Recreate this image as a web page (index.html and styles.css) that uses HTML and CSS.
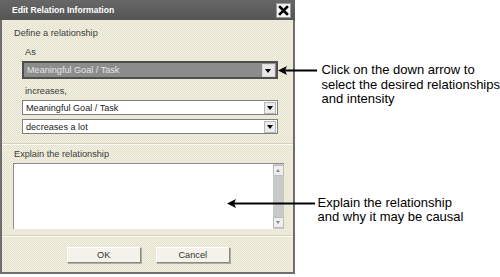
FILE: index.html
```html
<!DOCTYPE html>
<html lang="en">
<head>
    <meta charset="UTF-8">
    <title>Edit Relation Information</title>
    <link rel="stylesheet" href="styles.css">
</head>
<body>

<div class="page">

    <!-- Dialog -->
    <div class="dialog">
        <div class="titlebar">
            <span class="title">Edit Relation Information</span>
            <button class="close-btn">
                <svg width="11" height="11" viewBox="0 0 11 11">
                    <path d="M2 2 L9 9 M9 2 L2 9" stroke="#000" stroke-width="2.6" stroke-linecap="square"/>
                </svg>
            </button>
        </div>

        <div class="dialog-body">
            <div class="label">Define a relationship</div>

            <div class="group">
                <div class="label sub">As</div>
                <div class="select selected">
                    <span class="select-text">Meaningful Goal / Task</span>
                    <span class="select-arrow"></span>
                </div>
                <div class="label sub">increases,</div>
                <div class="select">
                    <span class="select-text">Meaningful Goal / Task</span>
                    <span class="select-arrow"></span>
                </div>
                <div class="select">
                    <span class="select-text">decreases a lot</span>
                    <span class="select-arrow"></span>
                </div>
            </div>

            <div class="divider"></div>

            <div class="label explain">Explain the relationship</div>
            <div class="textarea">
                <div class="text-field"></div>
                <div class="scrollbar">
                    <span class="scroll-btn up"></span>
                    <span class="scroll-btn down"></span>
                </div>
            </div>

            <div class="divider bottom"></div>

            <div class="buttons">
                <button class="btn">OK</button>
                <button class="btn">Cancel</button>
            </div>
        </div>
    </div>

    <!-- Подсказки -->
    <div class="notes">
        <div class="note note-select">
            <svg class="arrow" width="39" height="15" viewBox="0 0 39 15">
                <path d="M39 7.5 H6" stroke="#000" stroke-width="2"/>
                <path d="M0 7.5 L9 3 L7 7.5 L9 12 Z" fill="#000"/>
            </svg>
            <div class="note-text">Click on the down arrow to<br>select the desired relationships<br>and intensity</div>
        </div>
        <div class="note note-explain">
            <svg class="arrow" width="88" height="15" viewBox="0 0 88 15">
                <path d="M88 7.5 H6" stroke="#000" stroke-width="2"/>
                <path d="M0 7.5 L9 3 L7 7.5 L9 12 Z" fill="#000"/>
            </svg>
            <div class="note-text">Explain the relationship<br>and why it may be causal</div>
        </div>
    </div>

</div>

</body>
</html>
```

FILE: styles.css
```css
body {
    margin: 0;
    background-color: #fff;
    font-family: "Liberation Sans", Arial, sans-serif;
}

.page {
    display: flex;
    align-items: flex-start;
}

/* Диалог */
.dialog {
    width: 296px;
    height: 274px;
    box-sizing: border-box;
    border: 2px solid #6e6e6e;
    border-top: none;
    display: flex;
    flex-direction: column;
    background: repeating-conic-gradient(#f2f0e3 0 25%, #e5e2ce 0 50%) 0 0 / 2px 2px;
}

.titlebar {
    height: 20px;
    margin: 0 -2px;
    padding: 0 4px 0 12px;
    display: flex;
    align-items: center;
    justify-content: space-between;
    background: linear-gradient(#676767, #555);
}

.title {
    color: #fff;
    font-weight: bold;
    font-size: 8.6px;
}

.close-btn {
    width: 15px;
    height: 15px;
    padding: 0;
    border: 1px solid #9a9a9a;
    background-color: #f4f4f0;
    display: flex;
    align-items: center;
    justify-content: center;
}

.dialog-body {
    flex: 1;
    display: flex;
    flex-direction: column;
    padding: 7px 9px 0 11px;
}

.label {
    font-size: 9.2px;
    line-height: 13px;
    color: #3c3c3c;
    padding-left: 1px;
}

.group {
    display: flex;
    flex-direction: column;
    padding-left: 9px;
    padding-right: 6px;
}

.label.sub {
    padding-left: 3px;
    margin-top: 6px;
}

.label.sub + .select {
    margin-top: 2px;
}

/* Выпадающие списки */
.select {
    height: 15px;
    box-sizing: border-box;
    border: 1px solid #808080;
    background-color: #fff;
    display: flex;
    align-items: center;
    justify-content: space-between;
    margin-top: 4px;
}

.select-text {
    font-size: 9.1px;
    color: #222;
    padding-left: 3px;
}

.select-arrow {
    width: 12px;
    height: 12px;
    margin-right: 1px;
    box-sizing: border-box;
    border: 1px solid #b8b8b8;
    background-color: #ececec;
    display: flex;
    align-items: center;
    justify-content: center;
}

.select-arrow::after {
    content: "";
    border-left: 3px solid transparent;
    border-right: 3px solid transparent;
    border-top: 4px solid #000;
    margin-top: 1px;
}

.select.selected {
    height: 18px;
    border: 2px solid #4e4e4e;
    background-color: #8c8c8c;
    margin-top: 2px;
}

.select.selected .select-text {
    color: #e4e4e4;
    padding-left: 3px;
}

.select.selected .select-arrow {
    width: 13px;
    height: 13px;
    border-color: #d8d8d8;
    background-color: #e8e8e8;
}

.divider {
    height: 2px;
    margin: 9px -9px 0 -11px;
    border-top: 1px solid #d6d2bd;
    border-bottom: 1px solid #fbfaf4;
    box-sizing: border-box;
}

.divider.bottom {
    margin-top: 6px;
}

.label.explain {
    margin-top: 3px;
}

/* Поле для текста */
.textarea {
    height: 66px;
    margin-top: 2px;
    box-sizing: border-box;
    border-top: 1px solid #8c8c8c;
    border-left: 1px solid #8c8c8c;
    display: flex;
    background-color: #fff;
}

.text-field {
    flex: 1;
}

.scrollbar {
    width: 11px;
    background-color: #c9c9c9;
    display: flex;
    flex-direction: column;
    justify-content: space-between;
    padding: 1px 0;
}

.scroll-btn {
    width: 11px;
    height: 11px;
    box-sizing: border-box;
    border: 1px solid #bdbdbd;
    background-color: #eeeeee;
    display: flex;
    align-items: center;
    justify-content: center;
}

.scroll-btn.up::after {
    content: "";
    border-left: 2px solid transparent;
    border-right: 2px solid transparent;
    border-bottom: 3px solid #888;
}

.scroll-btn.down::after {
    content: "";
    border-left: 2px solid transparent;
    border-right: 2px solid transparent;
    border-top: 3px solid #888;
}

/* Кнопки */
.buttons {
    display: flex;
    justify-content: center;
    gap: 15px;
    margin-top: 10px;
}

.btn {
    width: 74px;
    height: 16px;
    padding: 0;
    font-family: "Liberation Sans", Arial, sans-serif;
    font-size: 9.2px;
    color: #333;
    background-color: #f4f2ea;
    border: 1px solid;
    border-color: #fff #8a8a8a #8a8a8a #fff;
    box-shadow: 1px 1px 0 #b0ad9c;
}

/* Подсказки */
.notes {
    display: flex;
    flex-direction: column;
    padding-top: 63px;
}

.note {
    display: flex;
    align-items: flex-start;
}

.note-select .arrow {
    margin-left: -17px;
    margin-right: 5px;
}

.note-explain {
    margin-top: 89px;
}

.note-explain .arrow {
    margin-left: -68px;
    margin-right: 3px;
}

.note-text {
    font-size: 13px;
    line-height: 14.5px;
    color: #000;
    white-space: nowrap;
}
```
